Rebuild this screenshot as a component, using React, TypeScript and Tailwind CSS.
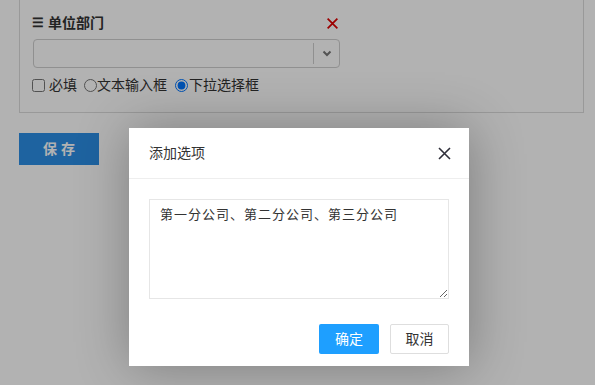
import React from "react";

export default function App() {
  const font = { fontFamily: '"Liberation Sans", "Noto Sans CJK SC", sans-serif' };
  return (
    <div className="relative w-[595px] h-[385px] overflow-hidden bg-white text-[#333]" style={font}>
      {/* page */}
      <div className="pl-[19px] pr-[11px]">
        <div className="border-x border-b border-[#dcdcdc] h-[113px] pl-[12px] pr-[20px] pt-[13px]">
          <div className="flex items-center w-[309px] justify-between h-[20px]">
            <div className="flex items-center gap-[4px] text-[14px] font-bold text-[#333]">
              <span className="text-[13px]">☰</span>
              <span>单位部门</span>
            </div>
            <svg width="13" height="13" viewBox="0 0 12 12" className="mr-[2px]">
              <path d="M1.5 1.5 L10.5 10.5 M10.5 1.5 L1.5 10.5" stroke="#e00000" strokeWidth="1.6" />
            </svg>
          </div>
          <div className="mt-[6px] ml-[1px] w-[307px] h-[29px] border border-[#cfcfcf] rounded-[4px] flex bg-white">
            <div className="flex-1" />
            <div className="w-[26px] border-l border-[#cfcfcf] my-[3px] flex items-center justify-center">
              <svg width="10" height="7" viewBox="0 0 10 7">
                <path d="M1.5 1.5 L5 5 L8.5 1.5" stroke="#777" strokeWidth="2" fill="none" />
              </svg>
            </div>
          </div>
          <div className="mt-[7px] flex items-center text-[14px] text-[#333]">
            <input type="checkbox" className="w-[13px] h-[13px] m-0 mr-[4px]" readOnly />
            <span>必填</span>
            <input type="radio" name="t" className="w-[13px] h-[13px] m-0 ml-[7px]" readOnly />
            <span>文本输入框</span>
            <input type="radio" name="t" defaultChecked className="w-[13px] h-[13px] m-0 ml-[8px] mr-[1px]" />
            <span>下拉选择框</span>
          </div>
        </div>
        <div className="mt-[20px] w-[80px] h-[32px] bg-[#2b8fe6] flex items-center justify-center text-white text-[14px] font-bold tracking-[4px] pl-[4px]">
          保存
        </div>
      </div>

      {/* overlay */}
      <div className="absolute inset-0 bg-black/30" />

      {/* modal */}
      <div
        className="absolute left-[129px] top-[128px] w-[340px] h-[238px] bg-white shadow-[1px_1px_50px_rgba(0,0,0,0.3)]"
        style={font}
      >
        <div className="h-[51px] border-b border-[#eeeeee] flex items-center justify-between pl-[20px] pr-[18px]">
          <span className="text-[14px] text-[#333]">添加选项</span>
          <svg width="13" height="13" viewBox="0 0 13 13">
            <path d="M1 1 L12 12 M12 1 L1 12" stroke="#2f2f3a" strokeWidth="1.6" />
          </svg>
        </div>
        <div className="px-[20px] pt-[20px]">
          <textarea
            readOnly
            defaultValue="第一分公司、第二分公司、第三分公司"
            className="block w-[300px] h-[100px] border border-[#e6e6e6] px-[10px] py-[5px] text-[13px] tracking-[1px] text-[#333] outline-none"
            style={font}
          />
        </div>
        <div className="flex justify-end gap-[11px] pr-[20px] mt-[25px]">
          <div className="w-[60px] h-[30px] bg-[#1e9fff] rounded-[2px] text-white text-[14px] flex items-center justify-center">
            确定
          </div>
          <div className="w-[59px] h-[30px] border border-[#dedede] rounded-[2px] text-[#333] text-[14px] flex items-center justify-center">
            取消
          </div>
        </div>
      </div>
    </div>
  );
}
